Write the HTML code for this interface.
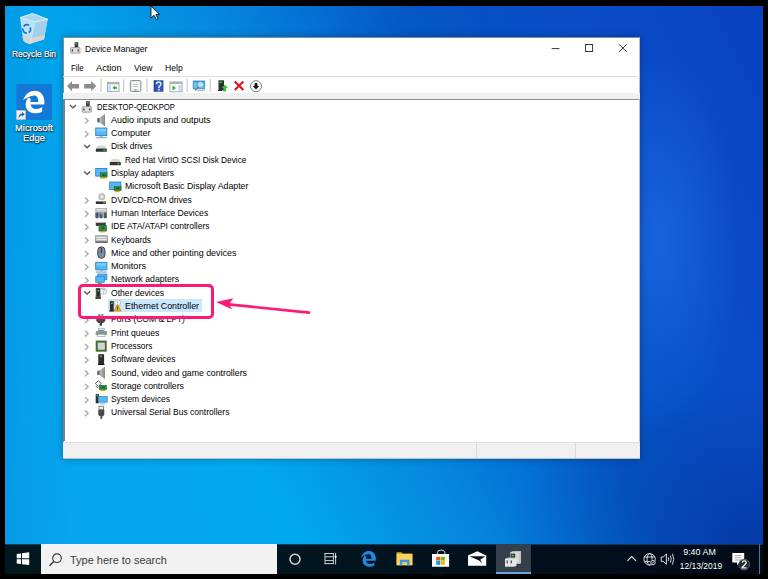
<!DOCTYPE html>
<html><head><meta charset="utf-8"><style>
*{margin:0;padding:0;box-sizing:border-box}
html,body{width:768px;height:579px;overflow:hidden;background:#000;font-family:"Liberation Sans",sans-serif}
.a{position:absolute}
#desk{position:absolute;left:5px;top:6px;width:758px;height:538px;overflow:hidden;
 background:radial-gradient(ellipse 260px 160px at 758px 538px,rgba(0,20,110,0.35),rgba(0,20,110,0) 100%),linear-gradient(90deg,rgba(0,50,140,0.10) 0px,rgba(0,50,140,0) 80px),radial-gradient(ellipse 80px 190px at 655px 235px,rgba(40,120,240,0.5),rgba(40,120,240,0) 100%),linear-gradient(64deg,#08a6f0 0%,#00a8f0 29%,#0592e2 40%,#0585dc 47%,#0472d6 54%,#0558c6 64%,#0650c6 72%,#0a4cc8 83%,#0842c0 100%)}
.dl{position:absolute;color:#fff;font-size:9.8px;line-height:11px;text-shadow:0 1px 1px rgba(0,0,0,0.95),1px 1px 1.5px rgba(0,0,0,0.6),0 0 2px rgba(0,0,0,0.7);-webkit-text-stroke:0.25px #fff;white-space:nowrap;text-align:center}
#win{position:absolute;left:63px;top:37px;width:577px;height:422.3px;background:#fff;border:1px solid rgba(20,50,80,0.55);border-right-color:rgba(20,50,80,0.3);border-bottom-color:rgba(20,50,80,0.3);box-shadow:0 0 7px rgba(0,0,0,0.3)}
.tt{position:absolute;font-size:9.8px;line-height:13px;color:#000;white-space:nowrap}
.mt{position:absolute;font-size:9.8px;color:#000;white-space:nowrap;line-height:13px}
#task{position:absolute;left:5px;top:544px;width:758px;height:30px;background:linear-gradient(90deg,#021820 0%,#02161f 40%,#010f1d 70%,#010b1a 100%);border-top:1px solid rgba(30,110,170,0.45)}
</style></head><body>
<div id="desk"></div>
<!-- desktop icons -->
<svg class="a" style="left:15px;top:10px" width="40" height="38" viewBox="15 10 40 38">
 <path d="M20 17.6 L23.2 40.2 Q24 42.6 30 43.8 L44 39.2 L47.7 19.2 L35 22 Z" fill="#c4e6f8" opacity="0.95"/>
 <path d="M35 22 L47.7 19.2 L44 39.2 L30 43.8 Z" fill="#a2d0ea"/>
 <path d="M20 17.6 L32.5 13.4 L47.7 19.2 L35 22 Z" fill="#a9d9f2" stroke="#e6f5fc" stroke-width="0.9"/>
 <path d="M22.4 36 L30 38.5 L44.8 35 L44 39.2 L30 43.8 Q24 42.6 23.2 40.2 Z" fill="#d9d6d2"/>
 <path d="M35 22 L30 43.8" stroke="#e0f2fb" stroke-width="0.5"/>
 <path d="M23.8 26.5 A3.6 3.6 0 0 1 29 25.2" fill="none" stroke="#1f6fd8" stroke-width="1.8"/>
 <path d="M30 27.5 A3.6 3.6 0 0 1 28.8 32.4" fill="none" stroke="#1f6fd8" stroke-width="1.8"/>
 <path d="M26.8 33 A3.6 3.6 0 0 1 23 28.5" fill="none" stroke="#1f6fd8" stroke-width="1.8"/>
</svg>
<div class="dl" style="left:5.3px;top:47.8px;width:58px;transform:scaleX(0.85)">Recycle Bin</div>
<svg class="a" style="left:16px;top:84px" width="36" height="36" viewBox="0 0 36 36">
 <rect x="0.4" y="0" width="35.6" height="36" fill="#1478d6"/>
 <path d="M7.2 16.4 C9.5 9.5 14 6.8 18.7 6.8 C24.8 6.8 28.4 11.5 28.4 18 L28.4 20.6 L26.1 20.6 L26.1 27.7 C24 28.8 21.5 29.2 19 29.2 C13 29.2 9.6 25.3 9.6 20.5 C9.6 17 11.2 14.3 13.2 12.9 C11 13.4 8.6 14.6 7.2 16.4 Z" fill="#fff"/>
 <path d="M14.4 18 C14.5 14 16.4 11.6 18.4 11.6 C21 11.6 22.2 14.2 22.2 18 Z" fill="#1478d6"/>
 <path d="M14.6 20.6 H26.2 V23.1 C24.6 24.4 22.5 25.1 20.1 25.1 C16.8 25.1 14.8 23.3 14.6 20.6 Z" fill="#1478d6"/>
 <path d="M12.6 13.2 C14 12.2 15.6 11.7 17.2 11.7 L14.4 15.6 C14.2 14.6 13.6 13.7 12.6 13.2 Z" fill="#1478d6"/>
 <rect x="0.5" y="26.5" width="9" height="9" fill="#f2f2f2" stroke="#c8c8c8" stroke-width="0.5"/>
 <path d="M2.6 34.5 C2.4 31.5 3.6 29.6 6.2 29.4 V28 L8.6 30.3 L6.2 32.6 V31.2 C4.6 31.3 3.4 32.4 2.6 34.5 Z" fill="#1d5bb5"/>
</svg>
<div class="dl" style="left:5px;top:122px;width:58px;transform:scaleX(0.95)">Microsoft</div>
<div class="dl" style="left:5px;top:132px;width:58px;transform:scaleX(0.95)">Edge</div>

<!-- window -->
<div id="win"></div>
<svg class="a" style="left:69.5px;top:42px" width="12" height="12" viewBox="0 0 12 12"><rect x="4.6" y="0.2" width="3.6" height="5.6" fill="#3a3a3a"/><rect x="5.4" y="1.1" width="1.8" height="1.4" fill="#36c836"/><rect x="0.6" y="5.6" width="9.4" height="5.6" rx="0.6" fill="#dcdcdc" stroke="#8a8a8a" stroke-width="0.7"/><rect x="1.8" y="7.4" width="1.2" height="2" fill="#333"/><rect x="7.6" y="7.4" width="1.2" height="2" fill="#333"/></svg>
<div class="mt" style="left:85.3px;top:42.2px;transform:scaleX(0.873);transform-origin:0 0;">Device Manager</div>
<svg class="a" style="left:548px;top:40px" width="84" height="16" viewBox="0 0 84 16">
 <path d="M3.6 8.6h7.8" stroke="#333" stroke-width="1"/>
 <rect x="37.6" y="4.5" width="7" height="7" fill="none" stroke="#333" stroke-width="1"/>
 <path d="M71 4.2l7.8 7.8M78.8 4.2L71 12" stroke="#333" stroke-width="1"/>
</svg>
<div class="mt" style="left:71.4px;top:61px;transform:scaleX(0.803);transform-origin:0 0;">File</div>
<div class="mt" style="left:96.4px;top:61px;transform:scaleX(0.940);transform-origin:0 0;">Action</div>
<div class="mt" style="left:133.8px;top:61px;transform:scaleX(0.878);transform-origin:0 0;">View</div>
<div class="mt" style="left:164.6px;top:61px;transform:scaleX(0.883);transform-origin:0 0;">Help</div>
<div class="a" style="left:63px;top:76px;width:577px;height:1px;background:#dcdcdc"></div>
<!-- toolbar -->
<svg class="a" style="left:64px;top:77px" width="210" height="16" viewBox="64 77 210 16">
 <path d="M67 86 L72 81 V84 H79 V88.5 H72 V91.2 Z" fill="#8c8c8c"/>
 <path d="M96.2 86 L91.2 81 V84 H84.2 V88.5 H91.2 V91.2 Z" fill="#8c8c8c"/>
 <rect x="100.3" y="79" width="1.3" height="13" fill="#cfcfcf"/>
 <rect x="107.5" y="82.3" width="11.5" height="9.2" fill="#fff" stroke="#8a94a0" stroke-width="0.8"/>
 <rect x="107.5" y="82.3" width="11.5" height="2" fill="#a9b3be"/>
 <rect x="108.6" y="85" width="2.2" height="5.8" fill="#b9d3ee"/>
 <path d="M112.5 87.8 L115 85.6 V90 Z" fill="#2fb32f"/><rect x="114.5" y="86.7" width="2.5" height="2.2" fill="#2fb32f"/>
 <rect x="123" y="79" width="1.3" height="13" fill="#cfcfcf"/>
 <rect x="130.3" y="80.5" width="10.6" height="11" rx="1.3" fill="#e8e8e8" stroke="#8e8e8e" stroke-width="1"/>
 <rect x="132" y="82.5" width="7" height="6.5" fill="#fafafa"/>
 <rect x="133" y="84" width="5" height="0.8" fill="#b0b0b0"/><rect x="133" y="86" width="5" height="0.8" fill="#b0b0b0"/>
 <rect x="134" y="89.5" width="3" height="1" fill="#3cb0e0"/>
 <rect x="146.3" y="79" width="1.3" height="13" fill="#cfcfcf"/>
 <defs><linearGradient id="hg" x1="0" x2="1" y1="0" y2="0"><stop offset="0" stop-color="#1c3c9c"/><stop offset="0.5" stop-color="#3a62c8"/><stop offset="1" stop-color="#2a4cb0"/></linearGradient></defs>
 <rect x="153.7" y="80.2" width="9.7" height="11.6" fill="url(#hg)"/>
 <path d="M156.4 84.2 Q156.4 81.9 158.6 81.9 Q160.9 81.9 160.9 84 Q160.9 85.3 159.6 86.1 Q158.9 86.6 158.9 87.6 V88" fill="none" stroke="#e6ecff" stroke-width="1.5"/>
 <rect x="158.1" y="88.9" width="1.6" height="1.6" fill="#e6ecff"/>
 <rect x="170" y="82" width="12" height="9.8" fill="#fff" stroke="#8a94a0" stroke-width="0.8"/>
 <rect x="170" y="82" width="12" height="2" fill="#a9b3be"/>
 <path d="M172.5 85.5 L176 88 L172.5 90.5Z" fill="#2fb32f"/>
 <rect x="178.5" y="85" width="2.2" height="5.8" fill="#b9d3ee"/>
 <rect x="186.5" y="79" width="1.3" height="13" fill="#cfcfcf"/>
 <rect x="193.2" y="81" width="11.5" height="7.8" fill="#6cc0f4" stroke="#2a8ad0" stroke-width="0.8"/>
 <rect x="193.6" y="81.2" width="10.7" height="1" fill="#2a86cc"/>
 <circle cx="200.6" cy="84.6" r="3.1" fill="#bfe4fb" stroke="#4a8fc0" stroke-width="0.7"/>
 <path d="M198.4 86.9 L195 90.4" stroke="#707070" stroke-width="1.3"/>
 <rect x="197" y="89.8" width="8" height="0.9" fill="#8aa4b8"/>
 <rect x="209.5" y="79" width="1.3" height="13" fill="#cfcfcf"/>
 <rect x="218.5" y="80.3" width="5.5" height="10.2" fill="#2f2f2f"/>
 <rect x="219.6" y="81.5" width="2.2" height="1.6" fill="#3ad03a"/>
 <rect x="218" y="90" width="4" height="1" fill="#222"/>
 <path d="M224.8 84.8 L228 88 H226.2 V91.6 H223.4 V88 H221.6Z" fill="#37c437"/>
 <path d="M234.8 81.6 L243.4 90 M243.4 81.6 L234.8 90" stroke="#e3101c" stroke-width="2.1"/>
 <circle cx="256" cy="86.2" r="5.5" fill="#fff" stroke="#6e6e6e" stroke-width="0.9"/>
 <path d="M254.6 83 H257.4 V86 H259.2 L256 89.4 L252.8 86 H254.6Z" fill="#111"/>
</svg>
<!-- toolbar band & tree border -->
<div class="a" style="left:63px;top:93.3px;width:577px;height:5.3px;background:#f0f0f0"></div>
<div class="a" style="left:63.4px;top:98.6px;width:576px;height:1.4px;background:#8e8e8e"></div>
<div class="a" style="left:63.4px;top:98.6px;width:1.4px;height:342.8px;background:#7e7e7e"></div>
<!-- selection -->
<div class="a" style="left:108.3px;top:299px;width:93.4px;height:13.4px;background:#cce8ff"></div>
<svg class="a" style="left:0;top:0" width="768" height="579"><path d="M70 105.0 l2.95 2.9 l2.95 -2.9" fill="none" stroke="#4d4d4d" stroke-width="1.3"/><g transform="translate(81.5,101.00)"><rect x="4.6" y="0.2" width="3.6" height="5.6" fill="#3a3a3a"/><rect x="5.4" y="1.1" width="1.8" height="1.4" fill="#36c836"/><rect x="0.6" y="5.6" width="9.4" height="5.6" rx="0.6" fill="#dcdcdc" stroke="#8a8a8a" stroke-width="0.7"/><rect x="1.8" y="7.4" width="1.2" height="2" fill="#333"/><rect x="7.6" y="7.4" width="1.2" height="2" fill="#333"/></g><path d="M85 117.85 l3.2 2.9 l-3.2 2.9" fill="none" stroke="#9e9e9e" stroke-width="1.15"/><g transform="translate(95.3,114.00)"><path d="M2 4 H4.2 L9.2 0.3 V12 L4.2 8.3 H2Z" fill="#c4c4c4"/><path d="M6.6 2.3 L9.2 0.3 V12 L6.6 10Z" fill="#9a9a9a"/><path d="M4.2 4 L6.6 2.3 V10 L4.2 8.3Z" fill="#b0b0b0"/><rect x="2" y="4" width="2.2" height="4.3" fill="#666"/><path d="M9.2 0.3 V12" stroke="#6a6a6a" stroke-width="0.6"/></g><path d="M85 131.15 l3.2 2.9 l-3.2 2.9" fill="none" stroke="#9e9e9e" stroke-width="1.15"/><g transform="translate(95.3,127.40)"><rect x="0.4" y="0.6" width="11.2" height="7.6" fill="#57b6f4" stroke="#1d7fcf" stroke-width="0.8"/><rect x="1.2" y="1.4" width="9.6" height="2.5" fill="#7ccbf8"/><rect x="4.5" y="8.5" width="3" height="1" fill="#9ab"/><rect x="0.5" y="9.9" width="11" height="0.9" fill="#6f8ca6"/></g><path d="M84.2 144.89999999999998 l2.95 2.9 l2.95 -2.9" fill="none" stroke="#4d4d4d" stroke-width="1.3"/><g transform="translate(95.3,143.50)"><path d="M1.5 3.5 Q1.5 2 3 2 H9 Q10.5 2 10.5 3.5 V5H1.5Z" fill="#d9d9d9"/><rect x="0.5" y="5" width="11" height="3.2" rx="0.5" fill="#333"/><rect x="8" y="6" width="2" height="1.3" fill="#36c836"/></g><g transform="translate(109.3,157.00)"><path d="M1.5 3.5 Q1.5 2 3 2 H9 Q10.5 2 10.5 3.5 V5H1.5Z" fill="#d9d9d9"/><rect x="0.5" y="5" width="11" height="3.2" rx="0.5" fill="#333"/><rect x="8" y="6" width="2" height="1.3" fill="#36c836"/></g><path d="M84.2 171.5 l2.95 2.9 l2.95 -2.9" fill="none" stroke="#4d4d4d" stroke-width="1.3"/><g transform="translate(95.3,168.10)"><rect x="0.4" y="0.4" width="11.2" height="7.6" fill="#57b6f4" stroke="#1d7fcf" stroke-width="0.8"/><rect x="4.8" y="4.6" width="7" height="4.6" fill="#2a8a44" stroke="#1d5a2a" stroke-width="0.4"/><rect x="7" y="6" width="3" height="2" fill="#164"/><rect x="5.5" y="9.2" width="5" height="1.4" fill="#f0a010"/></g><g transform="translate(109.3,181.60)"><rect x="0.4" y="0.4" width="11.2" height="7.6" fill="#57b6f4" stroke="#1d7fcf" stroke-width="0.8"/><rect x="4.8" y="4.6" width="7" height="4.6" fill="#2a8a44" stroke="#1d5a2a" stroke-width="0.4"/><rect x="7" y="6" width="3" height="2" fill="#164"/><rect x="5.5" y="9.2" width="5" height="1.4" fill="#f0a010"/></g><path d="M85 197.65 l3.2 2.9 l-3.2 2.9" fill="none" stroke="#9e9e9e" stroke-width="1.15"/><g transform="translate(95.3,193.70)"><circle cx="6.5" cy="3" r="3.2" fill="#d0d0d0" stroke="#8a8a8a" stroke-width="0.5"/><circle cx="6.5" cy="3" r="0.9" fill="#fff"/><rect x="0.5" y="7.7" width="10" height="2.6" fill="#2f2f2f"/><rect x="7.6" y="8.4" width="2" height="1.2" fill="#36c836"/></g><path d="M85 210.95 l3.2 2.9 l-3.2 2.9" fill="none" stroke="#9e9e9e" stroke-width="1.15"/><g transform="translate(95.3,208.00)"><rect x="0.5" y="0.4" width="11" height="4.2" fill="#c8c8c8" stroke="#8a8a8a" stroke-width="0.5"/><rect x="1.5" y="1.4" width="9" height="0.8" fill="#eee"/><rect x="0" y="4.6" width="3.4" height="5.6" rx="1" fill="#4a5a6a"/><rect x="4" y="4.6" width="3.4" height="5.6" rx="1" fill="#4a5a6a"/><rect x="8.2" y="4.6" width="3.4" height="5.6" rx="1" fill="#4a5a6a"/><circle cx="4.5" cy="5.5" r="1" fill="#3a9ae0"/><circle cx="6.5" cy="5.5" r="0.9" fill="#e0a030"/></g><path d="M85 224.25 l3.2 2.9 l-3.2 2.9" fill="none" stroke="#9e9e9e" stroke-width="1.15"/><g transform="translate(95.3,221.40)"><rect x="0.5" y="0.7" width="10" height="3.8" fill="#3a3a3a"/><rect x="0.5" y="0.3" width="10" height="1.2" fill="#d0d0d0"/><rect x="3.6" y="3.8" width="7.8" height="6" fill="#2a8a44" stroke="#1d5a2a" stroke-width="0.4"/><rect x="6" y="5.5" width="3" height="2" fill="#164"/><rect x="4.5" y="9.8" width="5" height="1.2" fill="#f0a010"/></g><path d="M85 237.55 l3.2 2.9 l-3.2 2.9" fill="none" stroke="#9e9e9e" stroke-width="1.15"/><g transform="translate(95.3,235.00)"><rect x="0.3" y="0.7" width="12" height="6.6" fill="#b9bcc0" stroke="#7d8184" stroke-width="0.6"/><rect x="1.3" y="2" width="10" height="0.9" fill="#eceff1"/><rect x="1.3" y="4" width="10" height="0.9" fill="#eceff1"/><rect x="0.3" y="6.6" width="12" height="0.9" fill="#2d3033"/></g><path d="M85 250.85000000000002 l3.2 2.9 l-3.2 2.9" fill="none" stroke="#9e9e9e" stroke-width="1.15"/><g transform="translate(95.3,246.50)"><rect x="2.5" y="0.4" width="7.2" height="11.4" rx="3.6" fill="#7d8fa3" stroke="#3c4248" stroke-width="1"/><rect x="5.6" y="1.2" width="1" height="5.5" fill="#2c3238"/></g><path d="M85 264.15000000000003 l3.2 2.9 l-3.2 2.9" fill="none" stroke="#9e9e9e" stroke-width="1.15"/><g transform="translate(95.3,261.70)"><rect x="0.4" y="0.6" width="11.2" height="7.6" fill="#57b6f4" stroke="#1d7fcf" stroke-width="0.8"/><rect x="1.2" y="1.4" width="9.6" height="2.5" fill="#7ccbf8"/><rect x="4.5" y="8.5" width="3" height="1" fill="#9ab"/><rect x="0.5" y="9.9" width="11" height="0.9" fill="#6f8ca6"/></g><path d="M85 277.45 l3.2 2.9 l-3.2 2.9" fill="none" stroke="#9e9e9e" stroke-width="1.15"/><g transform="translate(95.3,273.70)"><rect x="2.4" y="0.3" width="9.2" height="5.8" fill="#57b6f4" stroke="#1d7fcf" stroke-width="0.7"/><rect x="0.5" y="2.6" width="8.5" height="6" fill="#57b6f4" stroke="#1d7fcf" stroke-width="0.7"/><rect x="2.5" y="9.2" width="4" height="1.2" fill="#30b040"/></g><path d="M84.2 291.2 l2.95 2.9 l2.95 -2.9" fill="none" stroke="#4d4d4d" stroke-width="1.3"/><g transform="translate(95.3,288.00)"><rect x="0.6" y="0.2" width="4.6" height="9.6" fill="#2e2e2e"/><rect x="0.6" y="0.2" width="1" height="9.6" fill="#555"/><circle cx="3.1" cy="2.6" r="0.9" fill="#3ee03e"/><rect x="0" y="9.4" width="5.8" height="1.4" fill="#222"/><rect x="0.4" y="8.2" width="4.8" height="0.5" fill="#666"/><circle cx="8.1" cy="3.2" r="3.1" fill="#fff" stroke="#b4b4b4" stroke-width="0.9"/><path d="M7.1 2.4 Q7.1 1.3 8.1 1.3 Q9.1 1.3 9.1 2.3 Q9.1 3 8.4 3.4 V4.3" fill="none" stroke="#3a8ee0" stroke-width="0.8"/><rect x="8" y="4.7" width="0.8" height="0.7" fill="#3a8ee0"/></g><g transform="translate(109.3,300.50)"><rect x="0.6" y="0.6" width="3.8" height="10" fill="#2e2e2e"/><circle cx="2.6" cy="2.8" r="0.9" fill="#3ee03e"/><rect x="0" y="10" width="4.6" height="1" fill="#222"/><circle cx="8.3" cy="2.3" r="3" fill="#fff" stroke="#b4b4b4" stroke-width="0.9"/><path d="M8.3 0.9 V2.4" stroke="#3a8ee0" stroke-width="0.8"/><path d="M8.2 3.8 L11.8 10.6 H4.6Z" fill="#f2b200" stroke="#9a6a00" stroke-width="0.5"/><rect x="7.8" y="6" width="0.8" height="2.4" fill="#222"/><rect x="7.8" y="9" width="0.8" height="0.8" fill="#222"/></g><path d="M85 317.35 l3.2 2.9 l-3.2 2.9" fill="none" stroke="#9e9e9e" stroke-width="1.15"/><g transform="translate(95.3,314.00)"><rect x="2.5" y="0.2" width="6" height="2.6" fill="#b0b0b0"/><rect x="3.5" y="0.2" width="0.9" height="2.6" fill="#777"/><rect x="6.6" y="0.2" width="0.9" height="2.6" fill="#777"/><path d="M1 2.8 H10 V7 L8 9 H3 L1 7Z" fill="#4a4a4a"/><rect x="4.3" y="9" width="2.4" height="2.6" fill="#3a3a3a"/></g><path d="M85 330.65000000000003 l3.2 2.9 l-3.2 2.9" fill="none" stroke="#9e9e9e" stroke-width="1.15"/><g transform="translate(95.3,328.30)"><rect x="2.8" y="0.4" width="6.4" height="2" fill="#fff" stroke="#888" stroke-width="0.5"/><rect x="3" y="1.4" width="3" height="1.2" fill="#3a9ae0"/><rect x="6" y="1.4" width="2.5" height="1.2" fill="#30b040"/><rect x="0.4" y="2.6" width="11.2" height="4.4" rx="0.8" fill="#8d939a"/><rect x="2.2" y="6" width="7.6" height="2.2" fill="#fff" stroke="#888" stroke-width="0.5"/></g><path d="M85 343.95 l3.2 2.9 l-3.2 2.9" fill="none" stroke="#9e9e9e" stroke-width="1.15"/><g transform="translate(95.3,340.20)"><rect x="0.6" y="0.6" width="10.8" height="10.8" fill="#2d6e3e" stroke="#b08a40" stroke-width="0.5"/><rect x="2.4" y="2.4" width="7.2" height="7.2" fill="#d4d4d4"/></g><path d="M85 357.25 l3.2 2.9 l-3.2 2.9" fill="none" stroke="#9e9e9e" stroke-width="1.15"/><g transform="translate(95.3,354.00)"><rect x="3" y="0.2" width="5.8" height="10.2" fill="#2b2b2b"/><rect x="4.6" y="1.6" width="2" height="1.6" fill="#36c836"/><rect x="2.6" y="10" width="6.6" height="1" fill="#111"/></g><path d="M85 370.55 l3.2 2.9 l-3.2 2.9" fill="none" stroke="#9e9e9e" stroke-width="1.15"/><g transform="translate(95.3,366.70)"><path d="M2 4 H4.2 L9.2 0.3 V12 L4.2 8.3 H2Z" fill="#c4c4c4"/><path d="M6.6 2.3 L9.2 0.3 V12 L6.6 10Z" fill="#9a9a9a"/><path d="M4.2 4 L6.6 2.3 V10 L4.2 8.3Z" fill="#b0b0b0"/><rect x="2" y="4" width="2.2" height="4.3" fill="#666"/><path d="M9.2 0.3 V12" stroke="#6a6a6a" stroke-width="0.6"/></g><path d="M85 383.85 l3.2 2.9 l-3.2 2.9" fill="none" stroke="#9e9e9e" stroke-width="1.15"/><g transform="translate(95.3,380.60)"><path d="M3 0.2 L6 3 L3 5.8 L0 3Z" fill="#fff" stroke="#333" stroke-width="0.8"/><path d="M0.6 5.5 L3 8" stroke="#333" stroke-width="0.8"/><rect x="4" y="4.6" width="7.4" height="4.6" fill="#2a8a44" stroke="#1d5a2a" stroke-width="0.4"/><rect x="6.5" y="5.8" width="3" height="2" fill="#164"/><rect x="5" y="9.2" width="5" height="1.3" fill="#f0a010"/></g><path d="M85 397.15000000000003 l3.2 2.9 l-3.2 2.9" fill="none" stroke="#9e9e9e" stroke-width="1.15"/><g transform="translate(95.3,394.00)"><rect x="0.4" y="0.1" width="3.2" height="9.2" fill="#2b2b2b"/><rect x="1" y="1" width="1.8" height="1.2" fill="#36c836"/><rect x="2.9" y="2.6" width="9" height="5.6" fill="#57b6f4" stroke="#1d7fcf" stroke-width="0.7"/><rect x="5" y="9.6" width="5" height="0.8" fill="#8aa0b4"/></g><path d="M85 410.45000000000005 l3.2 2.9 l-3.2 2.9" fill="none" stroke="#9e9e9e" stroke-width="1.15"/><g transform="translate(95.3,406.00)"><rect x="3.7" y="0.2" width="4.6" height="3.6" fill="#f4f4f4" stroke="#555" stroke-width="0.7"/><path d="M3 3.8 H9 V9 L7.2 10.6 H4.8 L3 9Z" fill="#4a4a4a"/><rect x="5.2" y="10.4" width="1.6" height="2.4" fill="#333"/></g></svg>
<div class="tt" style="left:97.2px;top:100.00px;transform:scaleX(0.788);transform-origin:0 0;">DESKTOP-QEOKPOP</div>
<div class="tt" style="left:111.2px;top:113.00px;transform:scaleX(0.923);transform-origin:0 0;">Audio inputs and outputs</div>
<div class="tt" style="left:111.2px;top:126.00px;transform:scaleX(0.920);transform-origin:0 0;">Computer</div>
<div class="tt" style="left:111.2px;top:139.00px;transform:scaleX(0.862);transform-origin:0 0;">Disk drives</div>
<div class="tt" style="left:125.2px;top:153.00px;transform:scaleX(0.846);transform-origin:0 0;">Red Hat VirtIO SCSI Disk Device</div>
<div class="tt" style="left:111.2px;top:166.00px;transform:scaleX(0.864);transform-origin:0 0;">Display adapters</div>
<div class="tt" style="left:125.2px;top:179.00px;transform:scaleX(0.896);transform-origin:0 0;">Microsoft Basic Display Adapter</div>
<div class="tt" style="left:111.2px;top:193.00px;transform:scaleX(0.873);transform-origin:0 0;">DVD/CD-ROM drives</div>
<div class="tt" style="left:111.2px;top:206.00px;transform:scaleX(0.884);transform-origin:0 0;">Human Interface Devices</div>
<div class="tt" style="left:111.2px;top:219.00px;transform:scaleX(0.867);transform-origin:0 0;">IDE ATA/ATAPI controllers</div>
<div class="tt" style="left:111.2px;top:233.00px;transform:scaleX(0.854);transform-origin:0 0;">Keyboards</div>
<div class="tt" style="left:111.2px;top:246.00px;transform:scaleX(0.910);transform-origin:0 0;">Mice and other pointing devices</div>
<div class="tt" style="left:111.2px;top:259.00px;transform:scaleX(0.931);transform-origin:0 0;">Monitors</div>
<div class="tt" style="left:111.2px;top:272.00px;transform:scaleX(0.887);transform-origin:0 0;">Network adapters</div>
<div class="tt" style="left:111.2px;top:286.00px;transform:scaleX(0.877);transform-origin:0 0;">Other devices</div>
<div class="tt" style="left:125.2px;top:299.00px;transform:scaleX(0.900);transform-origin:0 0;">Ethernet Controller</div>
<div class="tt" style="left:111.2px;top:312.00px;transform:scaleX(0.871);transform-origin:0 0;">Ports (COM &amp; LPT)</div>
<div class="tt" style="left:111.2px;top:326.00px;transform:scaleX(0.878);transform-origin:0 0;">Print queues</div>
<div class="tt" style="left:111.2px;top:339.00px;transform:scaleX(0.843);transform-origin:0 0;">Processors</div>
<div class="tt" style="left:111.2px;top:352.00px;transform:scaleX(0.865);transform-origin:0 0;">Software devices</div>
<div class="tt" style="left:111.2px;top:366.00px;transform:scaleX(0.898);transform-origin:0 0;">Sound, video and game controllers</div>
<div class="tt" style="left:111.2px;top:379.00px;transform:scaleX(0.887);transform-origin:0 0;">Storage controllers</div>
<div class="tt" style="left:111.2px;top:392.00px;transform:scaleX(0.860);transform-origin:0 0;">System devices</div>
<div class="tt" style="left:111.2px;top:405.00px;transform:scaleX(0.870);transform-origin:0 0;">Universal Serial Bus controllers</div>
<!-- status bar -->
<div class="a" style="left:63px;top:441.9px;width:577px;height:16.4px;background:#f0f0f0;border-top:1.5px solid #e0e0e0;border-right:1px solid #e6e6e6"></div>
<div class="a" style="left:476px;top:443px;width:1px;height:15px;background:#d8d8d8"></div>
<div class="a" style="left:575px;top:443px;width:1px;height:15px;background:#d8d8d8"></div>

<!-- pink highlight -->
<div class="a" style="left:77.7px;top:283.9px;width:136.8px;height:34.8px;border:3.2px solid #fc1a78;border-radius:5px"></div>
<svg class="a" style="left:210px;top:290px" width="105" height="30" viewBox="210 290 105 30">
 <path d="M228.5 304.4 L309 312.6" stroke="#fc1a78" stroke-width="2.7" stroke-linecap="round"/>
 <path d="M216 302 L233.3 298.2 L229 304.2 L232.2 309.6 Z" fill="#fc1a78"/>
</svg>
<!-- cursor -->
<svg class="a" style="left:150px;top:5px" width="12" height="16" viewBox="0 0 12 16">
 <path d="M1 1 V13 L4 10.2 L6.3 14.6 L8 13.8 L5.8 9.5 H9.5 Z" fill="#fff" stroke="#000" stroke-width="0.8" stroke-linejoin="round"/>
</svg>
<!-- taskbar -->
<div id="task"></div>
<svg class="a" style="left:16px;top:552px" width="14" height="14" viewBox="0 0 14 14">
 <path d="M0.7 2 L5 1.4 V6.2 H0.7Z M6 1.25 L13.2 0.3 V6.2 H6Z M0.7 7.2 H5 V12 L0.7 11.4Z M6 7.2 H13.2 V13.1 L6 12.15Z" fill="#fff"/>
</svg>
<div class="a" style="left:41px;top:544px;width:236px;height:30px;background:#f2f2f2"></div>
<svg class="a" style="left:48px;top:553px" width="15" height="14" viewBox="0 0 15 14">
 <circle cx="9" cy="5.2" r="4.3" fill="none" stroke="#333" stroke-width="1.1"/>
 <path d="M5.9 8.3 L1.5 12.7" stroke="#333" stroke-width="1.3"/>
</svg>
<div class="a" style="left:70.3px;top:552.5px;font-size:10.7px;line-height:14px;color:#3a3a3a;white-space:nowrap;transform:scaleX(1.025);transform-origin:0 0">Type here to search</div>
<svg class="a" style="left:288px;top:553px" width="14" height="14" viewBox="0 0 14 14"><circle cx="7" cy="6.3" r="5" fill="none" stroke="#d8d8d8" stroke-width="1.5"/></svg>
<svg class="a" style="left:322px;top:551px" width="16" height="15" viewBox="322 551 16 15">
 <path d="M325 553 V564.2 M333.4 553 V564.2" stroke="#c8c8c8" stroke-width="1"/>
 <path d="M324.6 553.5 H333.8 M325 556.8 H333.4 M325 560.6 H333.4 M324.6 563.6 H333.8" stroke="#d0d0d0" stroke-width="1"/>
 <path d="M335.6 552.8 V564.4" stroke="#d0d0d0" stroke-width="1"/>
 <circle cx="335.6" cy="556.8" r="1.1" fill="#fff"/>
</svg>
<svg class="a" style="left:356px;top:547px" width="24" height="24" viewBox="356 547 24 24">
 <g transform="translate(360.9 550.9) scale(0.707) translate(-7.2 -6.8)">
 <path d="M7.2 16.4 C9.5 9.5 14 6.8 18.7 6.8 C24.8 6.8 28.4 11.5 28.4 18 L28.4 20.6 L26.1 20.6 L26.1 27.7 C24 28.8 21.5 29.2 19 29.2 C13 29.2 9.6 25.3 9.6 20.5 C9.6 17 11.2 14.3 13.2 12.9 C11 13.4 8.6 14.6 7.2 16.4 Z" fill="#1e88e5"/>
 <path d="M14.4 18 C14.5 14 16.4 11.6 18.4 11.6 C21 11.6 22.2 14.2 22.2 18 Z" fill="#02121d"/>
 <path d="M14.6 20.6 H26.2 V23.1 C24.6 24.4 22.5 25.1 20.1 25.1 C16.8 25.1 14.8 23.3 14.6 20.6 Z" fill="#02121d"/>
 <path d="M12.6 13.2 C14 12.2 15.6 11.7 17.2 11.7 L14.4 15.6 C14.2 14.6 13.6 13.7 12.6 13.2 Z" fill="#02121d"/>
 </g>
</svg>
<svg class="a" style="left:394px;top:550px" width="20" height="18" viewBox="394 550 20 18">
 <path d="M396.6 552.3 H401.4 L402.6 553.5 H412.4 V565.2 H396.6 Z" fill="#e9a914"/>
 <rect x="396.6" y="554" width="15.8" height="11.2" fill="#f9d15e"/>
 <path d="M399.9 559.8 H409.5 V565.6 H407.2 V562.2 H402.2 V565.6 H399.9 Z" fill="#3d97e3"/>
</svg>
<svg class="a" style="left:430px;top:548px" width="21" height="20" viewBox="430 548 21 20">
 <path d="M437.3 554.2 V552.8 Q437.3 550 441.1 550 Q444.9 550 444.9 552.8 V554.2" fill="none" stroke="#e8e8e8" stroke-width="0.9"/>
 <path d="M432 554 H449.1 V566.2 Q449.1 566.8 448.5 566.8 H432.6 Q432 566.8 432 566.2 Z" fill="#fff"/>
 <rect x="436.2" y="556.8" width="4.1" height="3.8" fill="#f25022"/><rect x="440.8" y="556.8" width="4.1" height="3.8" fill="#7fba00"/>
 <rect x="436.2" y="561" width="4.1" height="3.8" fill="#00a4ef"/><rect x="440.8" y="561" width="4.1" height="3.8" fill="#ffb900"/>
</svg>
<svg class="a" style="left:466px;top:550px" width="22" height="18" viewBox="466 550 22 18">
 <path d="M468 555.6 L477.3 551.2 L486.2 555.6 V565.8 H468 Z" fill="#fff"/>
 <path d="M469.2 556.2 H485.2 L480.2 559.8 L482.3 563.2 L478.6 560.3 Z" fill="#02121d"/>
</svg>
<div class="a" style="left:496px;top:544px;width:35px;height:30px;background:#333f4a"></div>
<div class="a" style="left:496px;top:571.8px;width:35px;height:2.2px;background:#6ea3d6"></div>
<svg class="a" style="left:503px;top:549px" width="20" height="19" viewBox="503 549 20 19">
 <path d="M510.2 552.6 L512.5 551.2 H521 V563.2 L519 563.8 H510.2 Z" fill="#d9d9d9"/>
 <path d="M512.5 551.2 H521 V563.2 L519 563.8 V552.6 Z" fill="#c4c4c4"/>
 <rect x="510.6" y="553.6" width="4.6" height="4.4" fill="#2e2e2e"/>
 <rect x="511.6" y="554.6" width="2.4" height="1.8" fill="#2fc42f"/>
 <path d="M505 558.8 L508 557.8 H516.4 V566 L513.6 566.8 H505 Z" fill="#e6e6e6"/>
 <path d="M505 558.8 L508 557.8 H516.4 L513.6 558.8 Z" fill="#bdbdbd"/>
 <rect x="506.6" y="560.4" width="1.2" height="3" fill="#444"/><rect x="510.6" y="560.4" width="1.2" height="3" fill="#444"/>
</svg>
<svg class="a" style="left:620px;top:548px" width="60" height="22" viewBox="620 548 60 22">
 <path d="M627.4 560.8 L631.7 556.6 L636 560.8" fill="none" stroke="#e8e8e8" stroke-width="1.05"/>
 <circle cx="649.6" cy="559.3" r="5.7" fill="none" stroke="#e8e8e8" stroke-width="0.95"/>
 <ellipse cx="649.6" cy="559.3" rx="2.5" ry="5.7" fill="none" stroke="#e8e8e8" stroke-width="0.9"/>
 <path d="M644.3 557 H654.9 M644.3 561.6 H654.9" stroke="#e8e8e8" stroke-width="0.9"/>
 <circle cx="653" cy="562.6" r="2.9" fill="#02121d"/>
 <circle cx="653" cy="562.6" r="2.2" fill="none" stroke="#e8e8e8" stroke-width="0.9"/>
 <path d="M651.6 563.8 L654.4 561.4" stroke="#e8e8e8" stroke-width="0.8"/>
 <path d="M661.2 557 H663.2 L666.4 554 V564.2 L663.2 561.4 H661.2 Z" fill="none" stroke="#e8e8e8" stroke-width="0.95" stroke-linejoin="round"/>
 <path d="M668.2 557.4 Q669.2 559.2 668.2 561" fill="none" stroke="#e8e8e8" stroke-width="0.9"/>
 <path d="M670.3 555.6 Q672.2 559.2 670.3 562.8" fill="none" stroke="#e8e8e8" stroke-width="0.9"/>
 <path d="M672.4 553.8 Q675.2 559.2 672.4 564.6" fill="none" stroke="#e8e8e8" stroke-width="0.9"/>
</svg>
<div class="a" style="left:667.5px;top:546px;width:64px;text-align:center;font-size:8.9px;line-height:13px;color:#fff;white-space:nowrap">9:40 AM</div><div class="a" style="left:668.5px;top:560.4px;width:64px;text-align:center;font-size:8.7px;line-height:13px;color:#fff;white-space:nowrap;transform:scaleX(0.975)">12/13/2019</div>
<svg class="a" style="left:728px;top:549px" width="24" height="23" viewBox="728 549 24 23">
 <path d="M732.3 553 H744.2 V562.6 H739.5 L737 565 V562.6 H732.3 Z" fill="#fff"/>
 <path d="M734.9 555.6 H741.6 M734.9 557.8 H741.6 M734.9 560 H741.6" stroke="#8a8f96" stroke-width="0.8"/>
 <circle cx="744.2" cy="564.6" r="5.4" fill="#262a2e" stroke="#5f6368" stroke-width="0.9"/>
 <path d="M742.2 562.6 Q742.4 560.9 744.3 560.9 Q746.2 560.9 746.2 562.5 Q746.2 563.6 744.8 564.8 L742.2 567.2 V567.8 H746.4" fill="none" stroke="#fff" stroke-width="1.25"/>
</svg>
<div class="a" style="left:759px;top:544px;width:1.1px;height:30px;background:#6b7178"></div>
</body></html>
